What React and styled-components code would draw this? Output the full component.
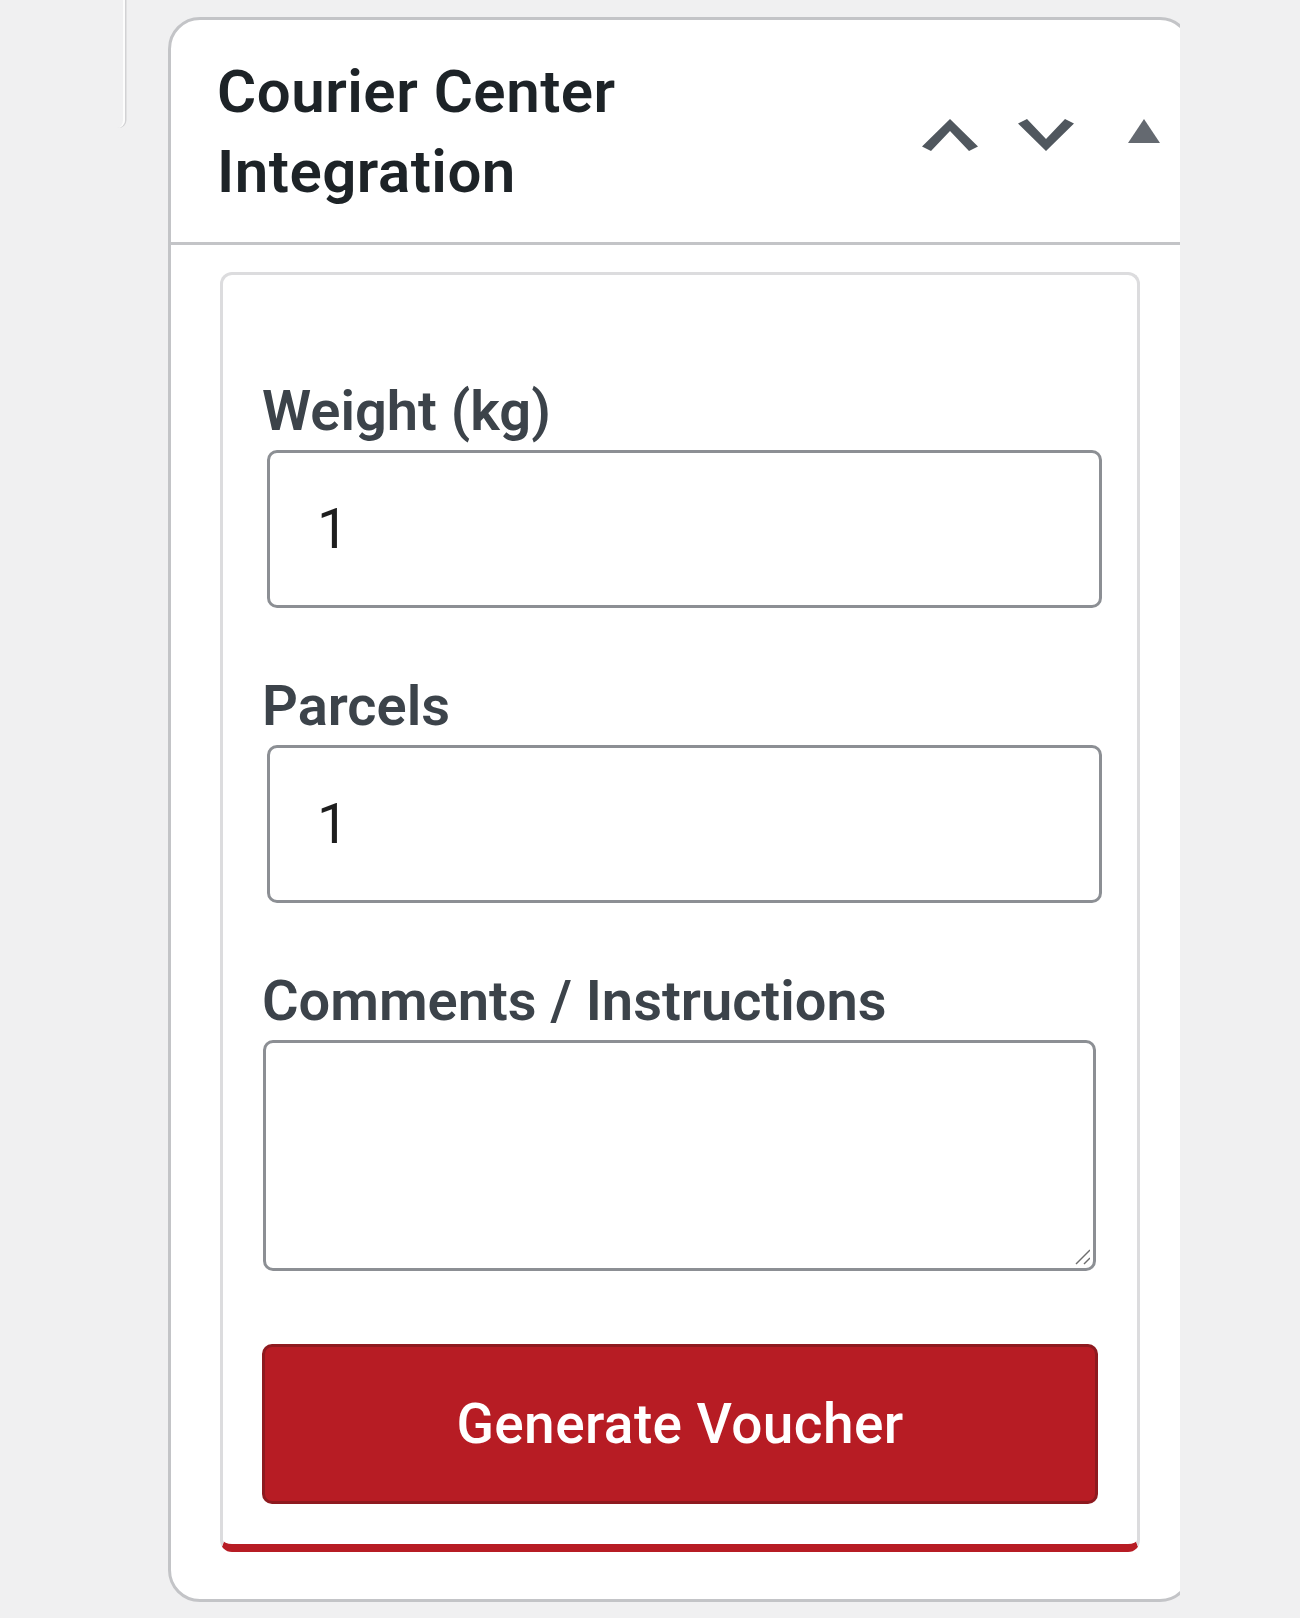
import React from 'react';
import styled, { createGlobalStyle } from 'styled-components';

const GlobalStyle = createGlobalStyle`
  html, body {
    margin: 0;
    padding: 0;
    background: #f0f0f1;
    font-family: Roboto, "Noto Sans", "Liberation Sans", sans-serif;
  }
  * {
    box-sizing: border-box;
  }
`;

const Page = styled.div`
  display: flex;
  align-items: flex-start;
  width: 1300px;
  min-height: 1618px;
  background: #f0f0f1;
`;

const SideStub = styled.div`
  width: 125px;
  height: 128px;
  border-right: 2px solid #fcfcfc;
  border-bottom-right-radius: 8px;
  box-shadow: 1.5px 0 0 #d2d2d4;
`;

const CardClip = styled.div`
  margin-left: 43px;
  margin-top: 17px;
  width: 1012px;
  overflow: hidden;
`;

const Card = styled.div`
  width: 1024px;
  background: #fff;
  border: 3px solid #c3c4c7;
  border-radius: 32px;
`;

const CardHeader = styled.div`
  display: flex;
  align-items: center;
  justify-content: space-between;
  padding: 32px 0 30px 46px;
  border-bottom: 3px solid #c3c4c7;
`;

const Title = styled.h2`
  margin: 0;
  max-width: 600px;
  font-size: 60px;
  line-height: 80px;
  font-weight: 600;
  letter-spacing: 0.5px;
  color: #1d2327;
`;

const HandleActions = styled.div`
  display: flex;
  align-items: center;
  align-self: center;
`;

const IconButton = styled.button`
  width: ${p => p.$width}px;
  margin-left: ${p => p.$gap || 0}px;
  height: 96px;
  padding: 0;
  border: none;
  background: transparent;
  display: flex;
  align-items: center;
  justify-content: center;
  cursor: pointer;

  svg {
    margin-top: ${p => p.$shift || 0}px;
  }
`;

const CardBody = styled.div`
  padding: 27px 49px 47px;
`;

const Panel = styled.div`
  border: 3px solid #dcdcde;
  border-bottom: 8px solid #b71c24;
  border-radius: 12px;
  padding: 97px 39px 40px;
`;

const Field = styled.div`
  display: flex;
  flex-direction: column;
  margin-bottom: ${p => p.$last ? 0 : 59}px;
`;

const Label = styled.label`
  display: block;
  font-size: 56px;
  line-height: 78px;
  font-weight: 600;
  letter-spacing: 0;
  color: #3c434a;
`;

const TextInput = styled.input`
  width: 835px;
  height: 158px;
  margin: 0 0 0 5px;
  padding: 0 47px;
  border: 3px solid #8c8f94;
  border-radius: 10px;
  background: #fff;
  font-family: Roboto, "Noto Sans", "Liberation Sans", sans-serif;
  font-size: 56px;
  font-weight: 400;
  color: #1e1e1e;
  outline: none;
`;

const AreaWrap = styled.div`
  position: relative;
  width: 833px;
  margin-left: 1px;
`;

const TextArea = styled.textarea`
  display: block;
  width: 100%;
  height: 231px;
  padding: 20px 40px;
  border: 3px solid #8c8f94;
  border-radius: 10px;
  background: #fff;
  font-family: Roboto, "Noto Sans", "Liberation Sans", sans-serif;
  font-size: 56px;
  color: #1e1e1e;
  resize: none;
  outline: none;
`;

const Grip = styled.svg`
  position: absolute;
  right: 6px;
  bottom: 6px;
  pointer-events: none;
`;

const SubmitButton = styled.button`
  display: block;
  width: 100%;
  height: 160px;
  margin-top: 73px;
  border: 3px solid #8e1a1f;
  border-radius: 10px;
  background: #b71c24;
  color: #fff;
  font-family: Roboto, "Noto Sans", "Liberation Sans", sans-serif;
  font-size: 55px;
  font-weight: 500;
  letter-spacing: 0.4px;
  cursor: pointer;
`;

const ChevronUp = () => (
  <svg width="56" height="32" viewBox="0 0 56 32">
    <polygon points="28,0 56,27.5 47,32 28,12 9,32 0,27.5" fill="#50575e" />
  </svg>
);

const ChevronDown = () => (
  <svg width="56" height="32" viewBox="0 0 56 32">
    <polygon points="28,32 56,4.5 47,0 28,20 9,0 0,4.5" fill="#50575e" />
  </svg>
);

const ToggleArrow = () => (
  <svg width="32" height="24" viewBox="0 0 32 24">
    <polygon points="16,0 32,24 0,24" fill="#646970" />
  </svg>
);

export default function App() {
  return (
    <Page>
      <GlobalStyle />
      <SideStub />
      <CardClip>
        <Card>
          <CardHeader>
            <Title>Courier Center Integration</Title>
            <HandleActions>
              <IconButton $width={96} $shift={6} aria-label="Move up">
                <ChevronUp />
              </IconButton>
              <IconButton $width={96} $shift={6} aria-label="Move down">
                <ChevronDown />
              </IconButton>
              <IconButton $width={90} $gap={5} $shift={-2} aria-label="Toggle panel">
                <ToggleArrow />
              </IconButton>
            </HandleActions>
          </CardHeader>
          <CardBody>
            <Panel>
              <Field>
                <Label htmlFor="cc-weight">Weight (kg)</Label>
                <TextInput id="cc-weight" type="text" defaultValue="1" />
              </Field>
              <Field>
                <Label htmlFor="cc-parcels">Parcels</Label>
                <TextInput id="cc-parcels" type="text" defaultValue="1" />
              </Field>
              <Field $last>
                <Label htmlFor="cc-comments">Comments / Instructions</Label>
                <AreaWrap>
                  <TextArea id="cc-comments" />
                  <Grip width="16" height="16" viewBox="0 0 16 16">
                    <line x1="2" y1="15" x2="16" y2="1" stroke="#6e6e6e" strokeWidth="1.5" />
                    <line x1="10" y1="15" x2="16" y2="9" stroke="#6e6e6e" strokeWidth="1.5" />
                  </Grip>
                </AreaWrap>
              </Field>
              <SubmitButton type="button">Generate Voucher</SubmitButton>
            </Panel>
          </CardBody>
        </Card>
      </CardClip>
    </Page>
  );
}
